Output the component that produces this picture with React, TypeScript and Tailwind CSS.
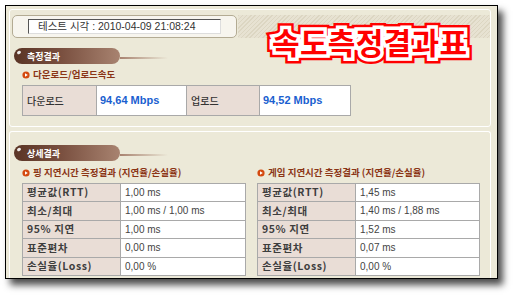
import React from "react";

const KR = "font-['Noto_Sans_CJK_KR',sans-serif]";
const NUM = "font-['Liberation_Sans','Noto_Sans_CJK_KR',sans-serif]";

function Bullet() {
  return (
    <svg width="8" height="8" viewBox="0 0 8 8" className="shrink-0">
      <circle cx="4" cy="4" r="3.6" fill="#d4490f" />
      <path d="M3 2.2 L5.8 4 L3 5.8 Z" fill="#ffffff" />
    </svg>
  );
}

function Pill({ label }: { label: string }) {
  return (
    <div className="flex items-center ml-[4px] h-[16px]">
      <div className="relative w-[106px] h-[16px] rounded-full bg-[linear-gradient(90deg,#5a3425_0%,#7a5040_45%,#a88370_100%)] flex items-center">
        <div className="absolute left-[3px] top-[3px] w-[4px] h-[3px] rounded-full bg-white/90 rotate-[-35deg]" />
        <span className={`${KR} ml-[13px] text-[9px] font-bold text-white leading-none`}>{label}</span>
      </div>
      <div className="w-[48px] h-[2px] mt-[4px] bg-[linear-gradient(90deg,#a88370,rgba(236,233,216,0))]" />
    </div>
  );
}

function SubHead({ text }: { text: string }) {
  return (
    <div className="flex items-center gap-[3px] h-[11px]">
      <Bullet />
      <span className={`${KR} text-[9.5px] font-bold text-[#8b3516] leading-none whitespace-nowrap`}>{text}</span>
    </div>
  );
}

function DetailTable({ rows, valueW }: { rows: [string, string][]; valueW: string }) {
  return (
    <div className={`grid ${valueW} grid-rows-[17px_18px_17px_18px_17px] gap-px p-px bg-[#a9a9a9]`}>
      {rows.map(([l, v]) => (
        <React.Fragment key={l}>
          <div className={`${KR} bg-[#e9ddd6] flex items-center pl-[4px] text-[10.5px] font-bold tracking-[0.6px] text-[#3e3e3e] leading-none`}>
            {l}
          </div>
          <div className={`${NUM} bg-white flex items-center pl-[4px] text-[10px] text-[#444] leading-none`}>
            {v}
          </div>
        </React.Fragment>
      ))}
    </div>
  );
}

export default function App() {
  const ping: [string, string][] = [
    ["평균값(RTT)", "1,00 ms"],
    ["최소/최대", "1,00 ms / 1,00 ms"],
    ["95% 지연", "1,00 ms"],
    ["표준편차", "0,00 ms"],
    ["손실율(Loss)", "0,00 %"],
  ];
  const game: [string, string][] = [
    ["평균값(RTT)", "1,45 ms"],
    ["최소/최대", "1,40 ms / 1,88 ms"],
    ["95% 지연", "1,52 ms"],
    ["표준편차", "0,07 ms"],
    ["손실율(Loss)", "0,00 %"],
  ];
  return (
    <div className="relative w-[513px] h-[295px] bg-white pt-[5px] pl-[5px] overflow-hidden">
      <div className="w-[493px] h-[274px] border border-black bg-[#ece9d8] shadow-[5px_6px_7px_rgba(0,0,0,0.7)] overflow-hidden flex flex-col pl-[3px] pr-[6px] pt-[3px] gap-[4px]">
        {/* Section 1 */}
        <div className="h-[118px] shrink-0 border border-white rounded-[3px] flex flex-col">
          <div className="mt-[5px] flex h-[23px]">
            <div className="ml-[2px] w-[225px] h-[23px] rounded-[5px] border border-[#b3ab93] bg-[#f7f5ee] flex items-center pl-[15px]">
              <div className="w-[193px] h-[15px] bg-white border-l border-t border-l-[#555] border-t-[#555] border-r border-b border-r-[#ddd] border-b-[#ddd] flex items-center pl-[9px]">
                <span className={`${NUM} text-[10.5px] text-[#333] leading-none whitespace-nowrap`}>테스트 시각 : 2010-04-09 21:08:24</span>
              </div>
            </div>
            <div className="flex-1 ml-[1px] bg-[repeating-linear-gradient(135deg,#dcd6c2_0px,#dcd6c2_1px,#e7e2d2_1px,#e7e2d2_3px)]" />
          </div>
          <div className="mt-[10px]">
            <Pill label="측정결과" />
          </div>
          <div className="mt-[5px] ml-[12px]">
            <SubHead text="다운로드/업로드속도" />
          </div>
          <div className="mt-[5px] ml-[12px] w-[329px] h-[31px] grid grid-cols-[73px_89px_72px_90px] gap-px p-px bg-[#a9a9a9]">
            <div className={`${KR} bg-[#e9ddd6] flex items-center pl-[4px] text-[10px] font-medium text-[#333] leading-none`}>다운로드</div>
            <div className={`${NUM} bg-white flex items-center pl-[3px] text-[11px] font-bold text-[#1a5fd0] leading-none`}>94,64 Mbps</div>
            <div className={`${KR} bg-[#e9ddd6] flex items-center pl-[4px] text-[10px] font-medium text-[#333] leading-none`}>업로드</div>
            <div className={`${NUM} bg-white flex items-center pl-[3px] text-[11px] font-bold text-[#1a5fd0] leading-none`}>94,52 Mbps</div>
          </div>
        </div>
        {/* Section 2 */}
        <div className="flex-1 border border-white border-b-0 rounded-t-[3px] flex flex-col">
          <div className="mt-[13px]">
            <Pill label="상세결과" />
          </div>
          <div className="mt-[6px] ml-[12px] flex gap-[11px]">
            <div className="w-[224px] flex flex-col gap-[5px]">
              <SubHead text="핑 지연시간 측정결과 (지연율/손실율)" />
              <DetailTable rows={ping} valueW="grid-cols-[97px_124px]" />
            </div>
            <div className="w-[223px] flex flex-col gap-[5px]">
              <SubHead text="게임 지연시간 측정결과 (지연율/손실율)" />
              <DetailTable rows={game} valueW="grid-cols-[97px_123px]" />
            </div>
          </div>
        </div>
      </div>
      <div className={`absolute left-[272px] top-[26px] grid ${KR} font-bold text-[30px] tracking-[0.3px] leading-none`}>
        <span className="col-start-1 row-start-1 text-[#ff0000] [-webkit-text-stroke:12px_#ff0000] whitespace-nowrap">속도측정결과표</span>
        <span className="col-start-1 row-start-1 text-[#ff0000] [-webkit-text-stroke:7px_#ffffff] [paint-order:stroke_fill] whitespace-nowrap">속도측정결과표</span>
      </div>
    </div>
  );
}
